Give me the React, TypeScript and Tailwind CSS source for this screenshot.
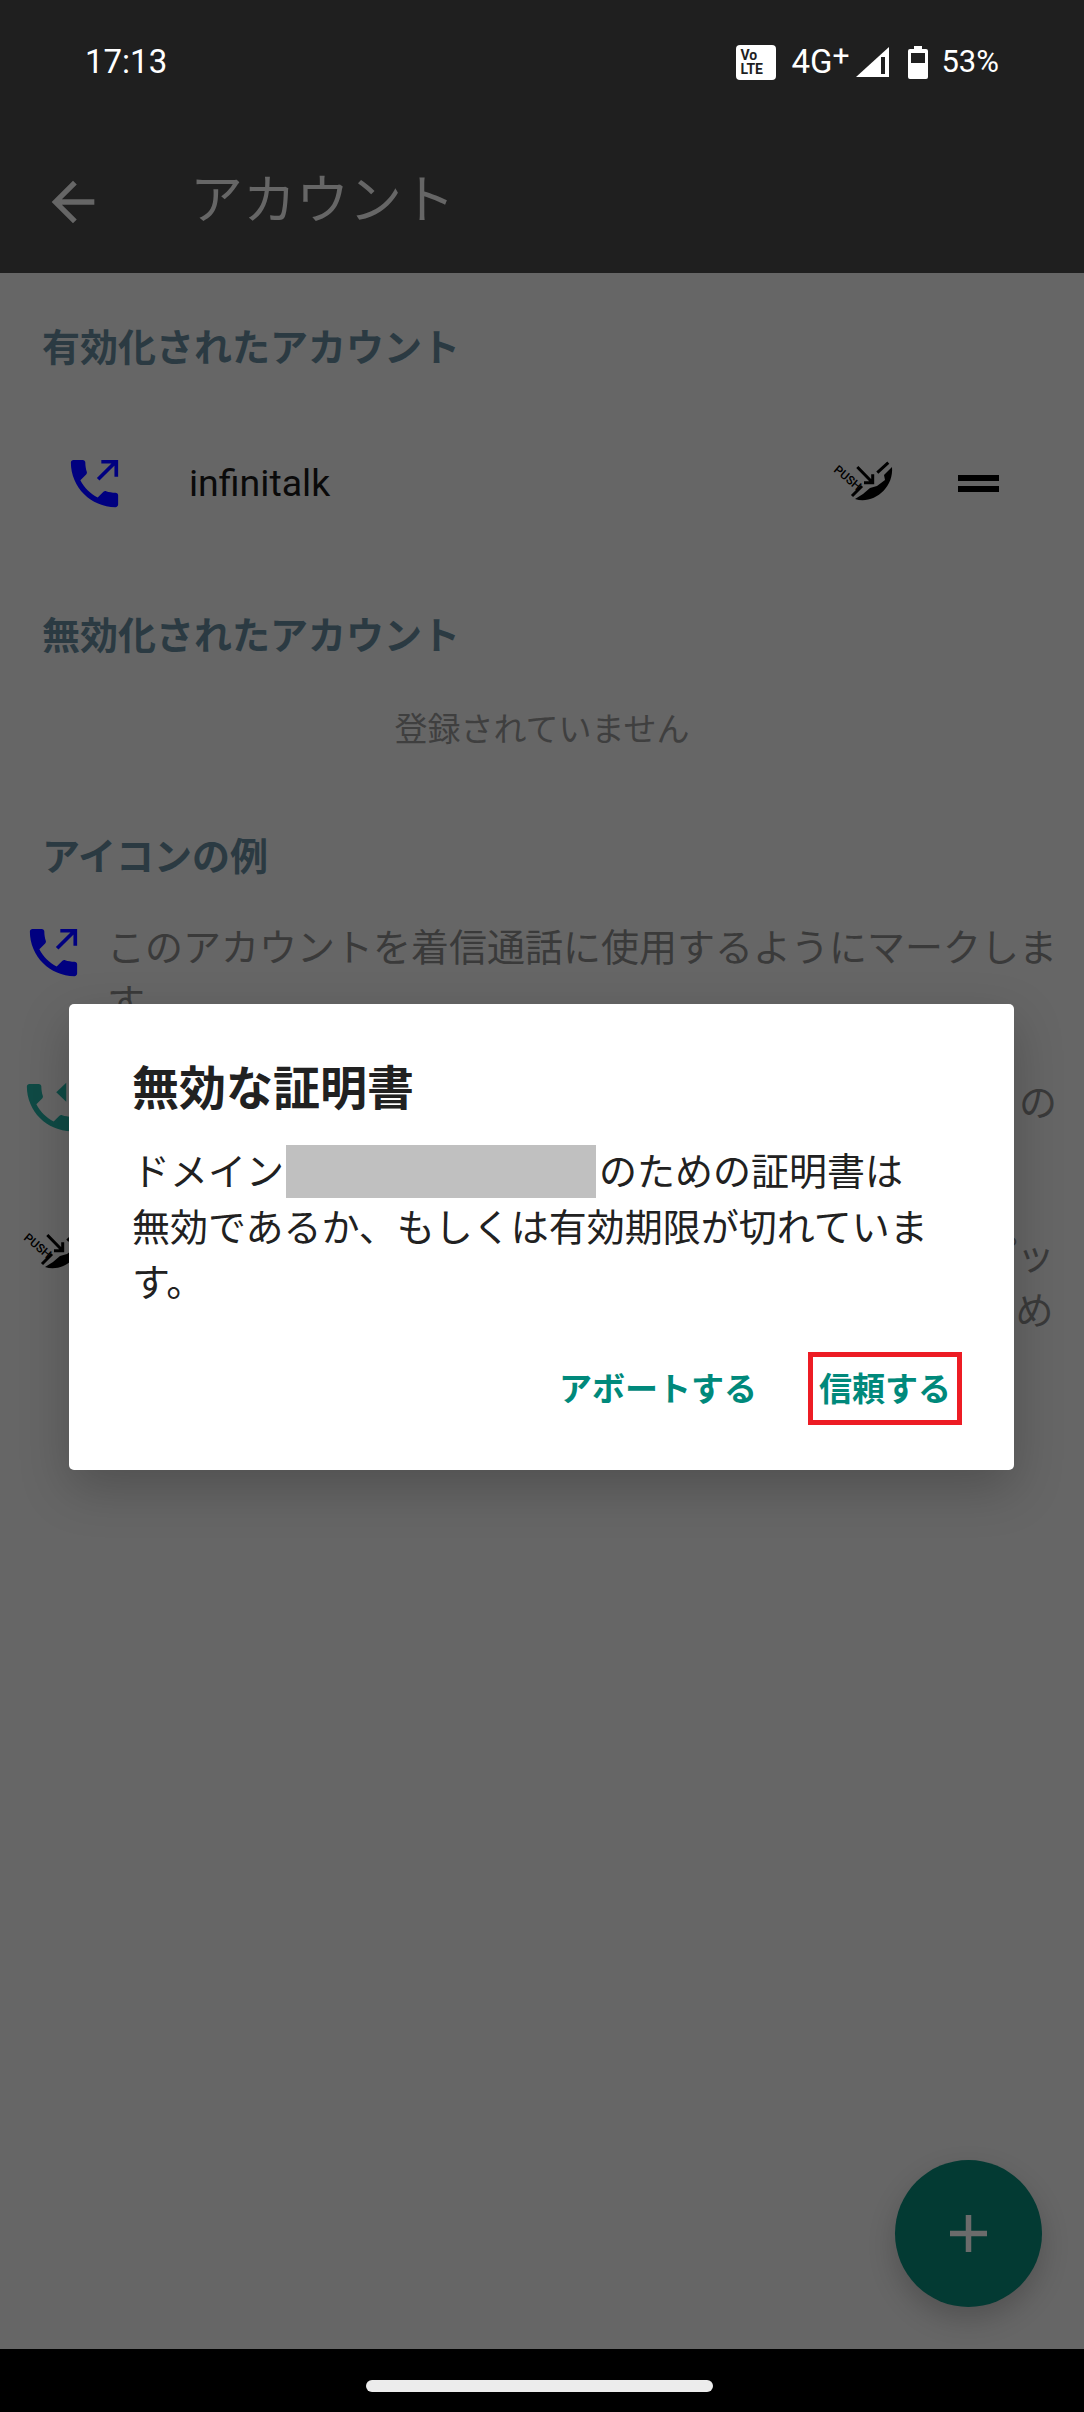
import React from 'react';

const PHONE =
  'M6.62 10.79c1.44 2.83 3.76 5.14 6.59 6.59l2.2-2.2c.27-.27.67-.36 1.02-.24 1.12.37 2.33.57 3.57.57.55 0 1 .45 1 1V20c0 .55-.45 1-1 1-9.39 0-17-7.61-17-17 0-.55.45-1 1-1h3.5c.55 0 1 .45 1 1 0 1.25.2 2.45.57 3.57.11.35.03.74-.25 1.02l-2.2 2.2z';

const OutgoingIcon = () => (
  <svg viewBox="0 0 24 24" className="w-[63px] h-[63px] shrink-0">
    <path d={PHONE} fill="#000080" />
    <path d="M13.4 10.4 20.2 3.6M14.6 3.7h5.7v5.7" fill="none" stroke="#000080" strokeWidth="1.4" />
  </svg>
);

const IncomingIcon = () => (
  <svg viewBox="0 0 24 24" className="w-[63px] h-[63px] shrink-0">
    <path d={PHONE} fill="#0f4a45" />
    <path d="M14.2 6.2 18 2.6v7.2z" fill="#0f4a45" />
  </svg>
);

const PushIcon = () => (
  <svg viewBox="0 0 68 44" className="w-[68px] h-[44px] shrink-0">
    <path d="M25 38C42 44 64 28 62 6L54 14 55 19 47 25 40 27 33 33Z" fill="#000" />
    <path d="M47.3 11.7 58.3 1.7M22 35 32 25" stroke="#000" strokeWidth="3" fill="none" />
    <path d="M27.3 6 42.7 21.7M42.7 13.3V21.7H34" stroke="#000" strokeWidth="3" fill="none" />
    <text
      x="15"
      y="20"
      fontSize="12"
      fontWeight="500"
      textAnchor="middle"
      fontFamily="Roboto, sans-serif"
      transform="rotate(40 15 20)"
    >
      PUSH
    </text>
  </svg>
);

const SectionTitle = ({ children, className }: { children: React.ReactNode; className: string }) => (
  <h2 className={`pl-[42px] h-[56px] leading-[56px] text-[38px] font-bold text-[#2b3a42] ${className}`}>{children}</h2>
);

const examples = [
  {
    icon: <OutgoingIcon />,
    text: 'このアカウントを着信通話に使用するようにマークします',
    cls: 'mt-[36px]',
    iconCls: 'pl-[22px]',
  },
  {
    icon: <IncomingIcon />,
    text: 'このアカウントを発信通話に使用する既定アカウントの設定としてマークします',
    cls: 'mt-[45px]',
    iconCls: 'pl-[19px]',
  },
  {
    icon: <PushIcon />,
    text: 'このアイコンは、このアカウントがサーバーからのプッシュ通知を受信して、着信に応答できるようにするためのものです',
    cls: 'mt-[43px]',
    iconCls: 'pl-[20px]',
  },
];

export default function App() {
  return (
    <div className="relative flex flex-col h-[2412px] w-[1084px] overflow-hidden bg-[#666666] font-['Roboto','Noto_Sans_CJK_JP',sans-serif]">
      <header className="bg-[#1f1f1f] h-[273px] shrink-0">
        <div className="h-[124px] flex items-center justify-between pl-[85px] pr-[85px] text-white">
          <span className="text-[33px]">17:13</span>
          <div className="flex items-center">
            <div className="w-[40px] h-[35px] bg-white rounded-[4px] flex flex-col justify-center pl-[4px] text-[#1f1f1f] text-[14px] font-bold leading-[14px]">
              <span>Vo</span>
              <span>LTE</span>
            </div>
            <div className="ml-[15px] flex items-start text-[33px] leading-[38px]">
              <span>4G</span>
              <span className="text-[30px] leading-[26px]">+</span>
            </div>
            <svg viewBox="0 0 33 30" className="ml-[7px] w-[33px] h-[30px]">
              <path d="M0 30 33 0V30Z" fill="#fff" />
              <rect x="25" y="10" width="4" height="17" fill="#1f1f1f" />
            </svg>
            <svg viewBox="0 0 20 33" className="ml-[19px] w-[20px] h-[33px]">
              <path d="M6 0h8v3h4a2 2 0 0 1 2 2v26a2 2 0 0 1-2 2H2a2 2 0 0 1-2-2V5a2 2 0 0 1 2-2h4z" fill="#fff" />
              <rect x="3" y="7" width="14" height="10" fill="#1f1f1f" />
            </svg>
            <span className="ml-[13px] text-[31px]">53%</span>
          </div>
        </div>
        <div className="h-[149px] flex items-center pl-[41px] pt-[6px] text-[#666666]">
          <svg viewBox="0 0 24 24" className="w-[64px] h-[64px]" fill="currentColor">
            <path d="M20 11H7.83l5.59-5.59L12 4l-8 8 8 8 1.41-1.41L7.83 13H20v-2z" />
          </svg>
          <h1 className="ml-[85px] text-[53px]">アカウント</h1>
        </div>
      </header>

      <main className="flex-1 min-h-0">
        <SectionTitle className="mt-[47px]">有効化されたアカウント</SectionTitle>
        <div className="mt-[59px] h-[96px] flex items-center pl-[63px] pr-[85px]">
          <OutgoingIcon />
          <span className="ml-[63px] text-[37.5px] text-[#0a0a0a]">infinitalk</span>
          <div className="ml-auto flex items-center">
            <PushIcon />
            <div className="ml-[60px] flex flex-col gap-[5px]">
              <div className="w-[41px] h-[6px] bg-black" />
              <div className="w-[41px] h-[6px] bg-black" />
            </div>
          </div>
        </div>

        <SectionTitle className="mt-[77px]">無効化されたアカウント</SectionTitle>
        <p className="mt-[41px] h-[50px] leading-[50px] text-center text-[33px] text-[#3f3f3f]">登録されていません</p>

        <SectionTitle className="mt-[74px]">アイコンの例</SectionTitle>
        {examples.map((row) => (
          <div key={row.text} className={`flex items-start ${row.cls}`}>
            <div className={`w-[107px] shrink-0 ${row.iconCls}`}>{row.icon}</div>
            <p className="w-[950px] text-[38px] leading-[55px] text-[#3a3a3a]">{row.text}</p>
          </div>
        ))}
      </main>

      <div className="h-[63px] bg-black shrink-0 flex items-center justify-center pt-[11px] pr-[6px]">
        <div className="w-[347px] h-[12px] rounded-full bg-[#ececec]" />
      </div>

      <div className="absolute left-[895px] top-[2160px] w-[147px] h-[147px] rounded-full bg-[#033a33] shadow-[0_12px_28px_rgba(0,0,0,0.2)] flex items-center justify-center">
        <svg viewBox="0 0 37 37" className="w-[37px] h-[37px]">
          <path d="M0 18.5H37M18.5 0V37" stroke="#6b6b6b" strokeWidth="5.5" />
        </svg>
      </div>

      <div className="absolute left-[69px] top-[1004px] w-[945px] h-[466px] rounded-[5px] bg-white shadow-[0_18px_50px_rgba(0,0,0,0.22)] pt-[55px]">
        <h3 className="pl-[63px] text-[47px] leading-[60px] font-bold text-[#212121]">無効な証明書</h3>
        <p className="mt-[26px] pl-[63px] pr-[82px] text-[38px] leading-[55px] text-[#212121]">
          ドメイン
          <span className="inline-block align-middle w-[310px] h-[53px] ml-[2px] mr-[3px] bg-[#c0c0c0] -translate-y-[3px]" />
          のための証明書は無効であるか、もしくは有効期限が切れています。
        </p>
        <div className="mt-[41px] pr-[52px] flex items-center justify-end text-[33px] font-bold text-[#00897b]">
          <button className="pt-[2px]">アボートする</button>
          <button className="ml-[51px] w-[154px] h-[73px] border-[5px] border-[#ed1c24] pt-[2px]">信頼する</button>
        </div>
      </div>
    </div>
  );
}
